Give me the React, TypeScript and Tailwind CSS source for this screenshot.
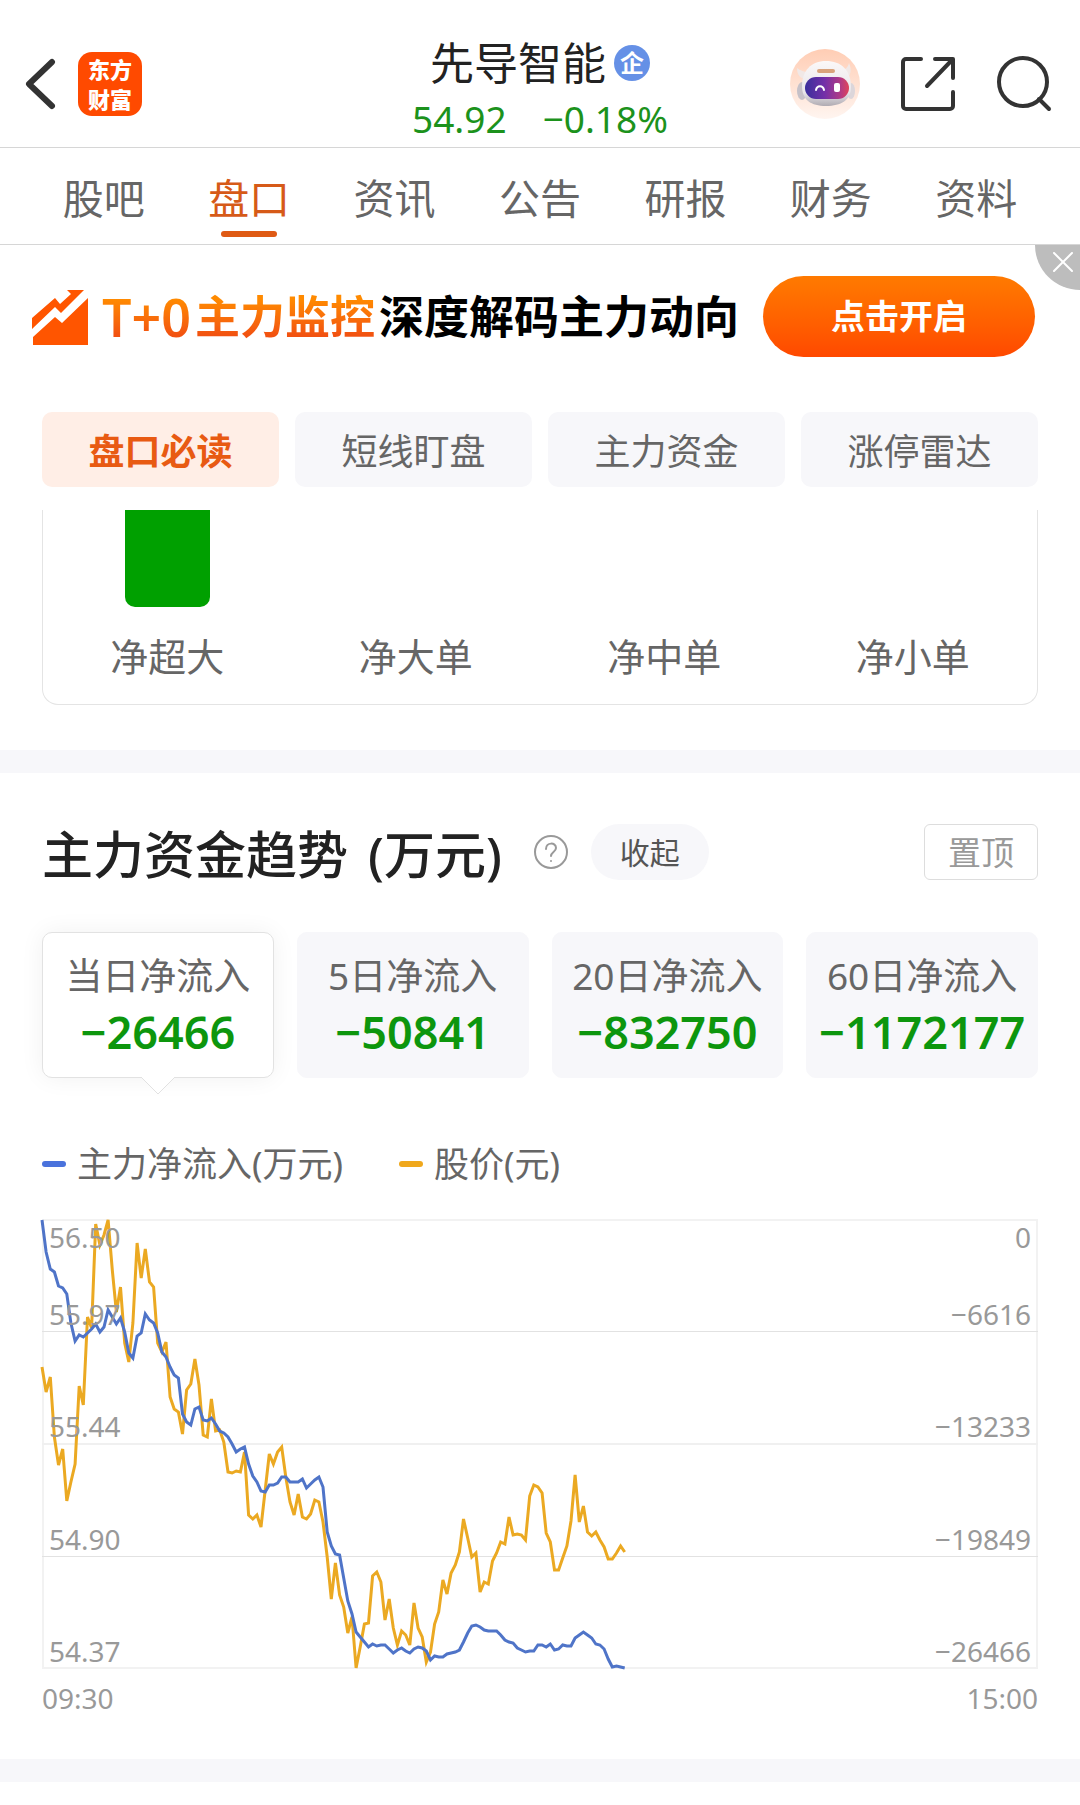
import { useState } from 'react';
import clsx from 'clsx';

const NAV_TABS = ['股吧', '盘口', '资讯', '公告', '研报', '财务', '资料'];

const SUB_TABS = ['盘口必读', '短线盯盘', '主力资金', '涨停雷达'];

const ORDER_FLOWS = [
  { label: '净超大', hasBar: true },
  { label: '净大单', hasBar: false },
  { label: '净中单', hasBar: false },
  { label: '净小单', hasBar: false },
];

const PERIODS = [
  { label: '当日净流入', value: '−26466' },
  { label: '5日净流入', value: '−50841' },
  { label: '20日净流入', value: '−832750' },
  { label: '60日净流入', value: '−1172177' },
];

const AXIS_ROWS = [
  { price: '55.97', flow: '−6616' },
  { price: '55.44', flow: '−13233' },
  { price: '54.90', flow: '−19849' },
  { price: '54.37', flow: '−26466' },
];

// One sample per minute, measured down from the top of the plot
const CHART_WIDTH = 996;
const SESSION_MINUTES = 241;

const PRICE_SERIES = [
  147, 172, 157, 217, 245, 229, 281, 262, 244, 166, 185, 97, 108, 4, 25, 15, 0, 50, 92, 67,
  123, 142, 103, 23, 58, 29, 62, 67, 123, 132, 122, 177, 189, 192, 214, 170, 164, 139, 165, 215,
  217, 179, 211, 210, 222, 252, 253, 251, 252, 232, 295, 299, 295, 307, 270, 234, 244, 232, 227, 257,
  282, 295, 274, 297, 299, 294, 280, 282, 302, 337, 379, 343, 375, 387, 413, 397, 448, 427, 404, 403,
  356, 352, 362, 400, 379, 408, 425, 411, 415, 425, 383, 408, 417, 442, 432, 404, 392, 360, 374, 353,
  345, 332, 299, 318, 337, 333, 372, 362, 364, 341, 333, 322, 324, 297, 315, 314, 315, 320, 276, 265,
  267, 273, 313, 322, 350, 350, 338, 326, 301, 255, 302, 286, 312, 316, 312, 320, 327, 339, 339, 333,
  326, 332,
];

const FLOW_SERIES = [
  0, 32, 49, 52, 66, 68, 74, 103, 121, 115, 117, 113, 109, 104, 112, 107, 90, 97, 104, 98,
  112, 133, 138, 116, 113, 94, 100, 103, 113, 132, 137, 147, 155, 158, 194, 202, 205, 189, 187, 200,
  201, 198, 204, 211, 213, 217, 224, 232, 229, 227, 244, 256, 262, 271, 272, 265, 265, 263, 257, 257,
  262, 262, 262, 259, 268, 264, 260, 257, 267, 312, 326, 334, 335, 358, 381, 394, 412, 417, 422, 427,
  424, 426, 425, 425, 429, 433, 430, 428, 431, 433, 429, 427, 428, 431, 440, 436, 437, 437, 434, 433,
  432, 430, 422, 413, 406, 405, 407, 410, 411, 411, 411, 415, 420, 422, 423, 428, 430, 432, 431, 431,
  425, 425, 427, 424, 430, 429, 425, 426, 426, 418, 415, 412, 415, 418, 424, 425, 429, 439, 447, 446,
  447, 448,
];

function toPoints(series: number[]) {
  const step = CHART_WIDTH / SESSION_MINUTES;
  return series.map((y, i) => `${(i * step).toFixed(1)},${y}`).join(' ');
}

function RobotAvatar() {
  return (
    <svg viewBox="0 0 70 70" className="size-[70px]" aria-hidden="true">
      <defs>
        <linearGradient id="avatarBg" x1="0" y1="0" x2="0" y2="1">
          <stop offset="0" stopColor="#ffcdb4" />
          <stop offset="1" stopColor="#fff5f0" />
        </linearGradient>
        <linearGradient id="helmet" x1="0" y1="0" x2="0" y2="1">
          <stop offset="0" stopColor="#fbf8f8" />
          <stop offset="0.7" stopColor="#e9e6ea" />
          <stop offset="1" stopColor="#b0abb2" />
        </linearGradient>
        <linearGradient id="visor" x1="0" y1="0" x2="1" y2="0">
          <stop offset="0" stopColor="#3a2f9c" />
          <stop offset="0.45" stopColor="#7430a8" />
          <stop offset="0.8" stopColor="#b03a86" />
          <stop offset="1" stopColor="#e0435a" />
        </linearGradient>
      </defs>
      <circle cx="35" cy="35" r="35" fill="url(#avatarBg)" />
      <path d="M7 19c0 8 4 11 11 11l5-7c-7 1-12-1-16-4zM59 14c3 7 2 13-4 17l-7-9c6 0 10-3 11-8z" fill="#f1e8e6" />
      <ellipse cx="12" cy="42" rx="5" ry="9" fill="#c6c1c8" />
      <ellipse cx="61" cy="42" rx="4" ry="8" fill="#dcd6da" />
      <path d="M36 12c-15 0-24 10-24 25 0 14 9 20 24 20s25-6 25-19c0-17-10-26-25-26z" fill="url(#helmet)" />
      <rect x="27" y="20" width="18" height="4" rx="2" fill="#d9a37c" />
      <rect x="15" y="28" width="44" height="22" rx="11" fill="url(#visor)" />
      <path d="M26 41c1-5 7-5 8 0" fill="none" stroke="#fff" strokeWidth="2" strokeLinecap="round" />
      <rect x="44" y="34" width="6" height="9" rx="2" fill="#fff" />
    </svg>
  );
}

function Header() {
  return (
    <header className="grid h-[148px] grid-cols-[1fr_auto_1fr] items-center border-b border-[#d6d6d6] pt-5 pr-7 pl-6">
      <div className="flex items-center gap-[22px]">
        <button type="button" aria-label="返回">
          <svg viewBox="0 0 32 56" className="h-14 w-8" fill="none" stroke="#333" strokeWidth="6" strokeLinecap="round" strokeLinejoin="round">
            <path d="M28 6 5 28l23 22" />
          </svg>
        </button>
        <a
          href="#home"
          className="flex size-16 items-center justify-center rounded-[14px] bg-[#ff4a00] text-[22px] leading-[30px] font-black text-white"
        >
          东方
          <br />
          财富
        </a>
      </div>

      <div className="flex flex-col items-center pt-3 pl-1">
        <h1 className="flex items-center gap-2 text-[44px] leading-[58px] text-[#222]">
          先导智能
          <span className="flex size-9 items-center justify-center rounded-full bg-[#6590e6] text-2xl leading-6 font-bold text-white">
            企
          </span>
        </h1>
        <p className="flex gap-9 text-[37px] leading-[54px] text-[#1c921c]">
          <span>54.92</span>
          <span>−0.18%</span>
        </p>
      </div>

      <div className="flex items-center justify-end gap-[41px]">
        <button type="button" aria-label="智能助手">
          <RobotAvatar />
        </button>
        <button type="button" aria-label="分享">
          <svg viewBox="0 0 54 54" className="size-[54px]" fill="none" stroke="#333" strokeWidth="4" strokeLinecap="round" strokeLinejoin="round">
            <path d="M20 2H5a3 3 0 0 0-3 3v44a3 3 0 0 0 3 3h44a3 3 0 0 0 3-3V35" />
            <path d="M34 2h18v19M51 3 26 29" />
          </svg>
        </button>
        <button type="button" aria-label="搜索">
          <svg viewBox="0 0 56 56" className="size-14" fill="none" stroke="#333" strokeWidth="4" strokeLinecap="round">
            <circle cx="27" cy="26" r="24" />
            <path d="m43 43 10 10" />
          </svg>
        </button>
      </div>
    </header>
  );
}

function NavTabs() {
  const [active, setActive] = useState('盘口');

  return (
    <nav className="flex h-[97px] border-b border-[#d6d6d6] px-[31px]">
      {NAV_TABS.map((tab) => (
        <button
          key={tab}
          type="button"
          onClick={() => setActive(tab)}
          className={clsx(
            'flex flex-1 flex-col items-center pt-5 text-[41px] leading-[60px]',
            active === tab ? 'text-[#d65a18]' : 'text-[#666]'
          )}
        >
          {tab}
          {active === tab && <span className="mt-[3px] h-[6px] w-14 rounded-full bg-[#df5a14]" />}
        </button>
      ))}
    </nav>
  );
}

function PromoBanner() {
  return (
    <section className="relative flex h-[143px] items-center justify-between pr-[45px] pl-8">
      <div className="flex items-center gap-[14px]">
        <svg viewBox="0 0 56 56" className="size-14" fill="#ff5500" aria-hidden="true">
          <path d="M0 29 23 9l5 6 11-10-4-4h17L29 24l-6-6L0 40z" />
          <path d="M1 56v-8l22-20 7 6L56 9v47z" />
        </svg>
        <p className="flex items-center gap-1 text-[45px] leading-[60px] font-bold text-black">
          <span className="flex items-center gap-1 bg-linear-to-b from-[#ff8a00] from-20% to-[#f25210] to-80% bg-clip-text text-transparent">
            <span className="text-[52px] font-semibold">T+0</span>主力监控
          </span>
          深度解码主力动向
        </p>
      </div>
      <button
        type="button"
        className="h-[81px] w-[272px] rounded-full bg-linear-to-b from-[#ff7a00] to-[#ff4800] text-[34px] font-bold text-white"
      >
        点击开启
      </button>
      <button
        type="button"
        aria-label="关闭"
        className="absolute top-0 right-0 flex size-[45px] items-center justify-center rounded-bl-full bg-[#bdbdbd] pb-3 pl-[10px]"
      >
        <svg viewBox="0 0 20 20" className="size-5" stroke="#fff" strokeWidth="2" strokeLinecap="round">
          <path d="m1 1 18 18M19 1 1 19" />
        </svg>
      </button>
    </section>
  );
}

function SubTabs() {
  const [active, setActive] = useState(SUB_TABS[0]);

  return (
    <div className="mt-6 grid grid-cols-4 gap-4 px-[42px]">
      {SUB_TABS.map((tab) => (
        <button
          key={tab}
          type="button"
          onClick={() => setActive(tab)}
          className={clsx(
            'h-[75px] rounded-[10px] pt-1 text-4xl',
            active === tab ? 'bg-[#ffeee6] font-bold text-[#e85a12]' : 'bg-[#f7f7fa] text-[#666]'
          )}
        >
          {tab}
        </button>
      ))}
    </div>
  );
}

function OrderFlowCard() {
  return (
    <section className="mt-[23px] px-[42px] pb-[45px]">
      <div className="grid h-[195px] grid-cols-4 rounded-b-2xl border-x border-b border-[#e4e4e4]">
        {ORDER_FLOWS.map((flow) => (
          <div key={flow.label} className="flex flex-col items-center">
            <div className={clsx('h-[97px] w-[85px] rounded-b-[10px]', flow.hasBar && 'bg-[#00a000]')} />
            <span className="mt-[22px] text-[38px] leading-[54px] text-[#666]">{flow.label}</span>
          </div>
        ))}
      </div>
    </section>
  );
}

function PeriodCards() {
  const [active, setActive] = useState(0);

  return (
    <div className="mt-[52px] grid grid-cols-4 gap-[23px]">
      {PERIODS.map((period, i) => (
        <button
          key={period.label}
          type="button"
          onClick={() => setActive(i)}
          className={clsx(
            'relative flex h-[146px] flex-col items-center rounded-[10px] border pt-4',
            active === i ? 'border-[#e2e2e2] bg-white shadow-[0_0_24px_rgba(0,0,0,0.06)]' : 'border-[#f7f7fa] bg-[#f7f7fa]'
          )}
        >
          <span className="text-[37px] leading-[54px] text-[#666]">{period.label}</span>
          <span className="text-[45px] leading-[58px] font-semibold text-[#0d960d]">{period.value}</span>
          {active === i && (
            <svg viewBox="0 0 36 18" className="absolute top-full h-[18px] w-9" fill="#fff" stroke="#e2e2e2">
              <path d="M0 -1 18 17 36 -1" />
            </svg>
          )}
        </button>
      ))}
    </div>
  );
}

function TrendChart() {
  return (
    <div>
      <div className="relative mt-[35px]">
        <svg
          viewBox="0 -1 996 450"
          preserveAspectRatio="none"
          className="block h-[450px] w-full overflow-visible"
          fill="none"
          role="img"
          aria-label="主力资金趋势"
        >
          <rect x="1" y="0" width="994" height="448" stroke="#f2f2f2" strokeWidth="2" />
          <path d="M0 111.5h996M0 336.5h996" stroke="#e2e2e2" strokeWidth="1" />
          <path d="M0 224h996" stroke="#f0f0f0" strokeWidth="2" />
          <polyline points={toPoints(PRICE_SERIES)} stroke="#eba922" strokeWidth="3" />
          <polyline points={toPoints(FLOW_SERIES)} stroke="#4f74c8" strokeWidth="3" />
        </svg>
        <div className="absolute inset-0 grid grid-rows-4 px-[7px] text-[28px] leading-9 text-[#999]">
          {AXIS_ROWS.map((row, i) => (
            <div key={row.price} className="flex flex-col justify-end">
              {i === 0 && (
                <div className="mb-auto flex justify-between">
                  <span>56.50</span>
                  <span>0</span>
                </div>
              )}
              <div className="flex justify-between">
                <span>{row.price}</span>
                <span>{row.flow}</span>
              </div>
            </div>
          ))}
        </div>
      </div>
      <div className="mt-[11px] flex justify-between text-[28px] leading-9 text-[#999]">
        <span>09:30</span>
        <span>15:00</span>
      </div>
    </div>
  );
}

function FundTrend() {
  return (
    <section className="px-[42px] pt-[51px] pb-[43px]">
      <div className="flex h-14 items-center">
        <h2 className="flex gap-5 pt-1 text-[51px] leading-[56px] font-medium text-[#222]">
          <span>主力资金趋势</span>
          <span>(万元)</span>
        </h2>
        <button type="button" aria-label="说明" className="ml-[31px]">
          <svg viewBox="0 0 36 36" className="size-9" fill="none" stroke="#999" strokeWidth="2" strokeLinecap="round">
            <circle cx="18" cy="18" r="16" />
            <path d="M13 15c0-7 10-7 10-1 0 4-5 4-5 8" />
            <circle cx="18" cy="27" r="1" fill="#999" stroke="none" />
          </svg>
        </button>
        <button type="button" className="ml-[22px] h-14 w-[118px] rounded-full bg-[#f7f7fa] pt-[2px] text-3xl text-[#555]">
          收起
        </button>
        <button type="button" className="ml-auto h-14 w-[114px] rounded-md border border-[#ddd] pt-[2px] text-[33px] text-[#999]">
          置顶
        </button>
      </div>

      <PeriodCards />

      <div className="mt-[66px] flex h-10 items-center gap-14 text-[35px] text-[#666]">
        <span className="flex items-center gap-[11px]">
          <i className="h-[6px] w-6 rounded-full bg-[#4a72dc]" />
          主力净流入(万元)
        </span>
        <span className="flex items-center gap-[11px]">
          <i className="h-[6px] w-6 rounded-full bg-[#f0a81c]" />
          股价(元)
        </span>
      </div>

      <TrendChart />
    </section>
  );
}

export default function App() {
  return (
    <div className="min-h-screen overflow-hidden bg-white font-['Noto_Sans','Noto_Sans_CJK_SC',sans-serif]">
      <Header />
      <NavTabs />
      <PromoBanner />
      <SubTabs />
      <OrderFlowCard />
      <div className="h-[23px] bg-[#f7f7fa]" />
      <FundTrend />
      <div className="h-[23px] bg-[#f7f7fa]" />
    </div>
  );
}
